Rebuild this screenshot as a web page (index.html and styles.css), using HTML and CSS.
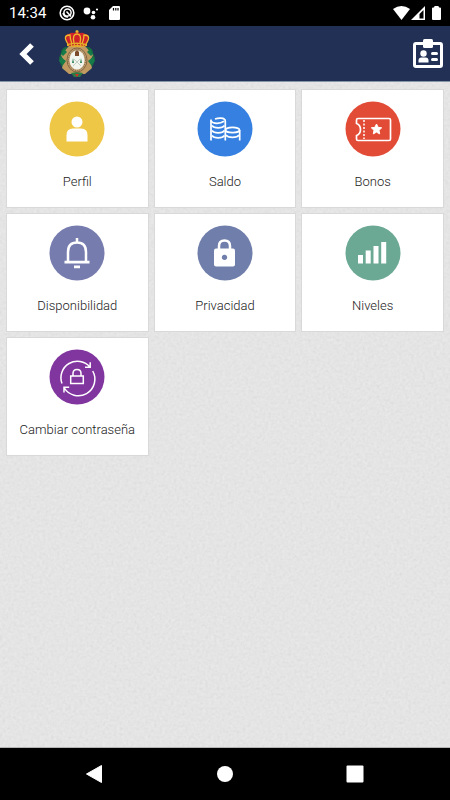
FILE: index.html
```html
<!DOCTYPE html>
<html lang="es">
<head>
<meta charset="utf-8">
<meta name="viewport" content="width=device-width, initial-scale=1">
<title>Mi cuenta</title>
<link rel="stylesheet" href="styles.css">
</head>
<body>
<div class="status">
  <time class="clock">14:34</time>
  <svg class="notices" viewBox="0 0 64 26" aria-hidden="true">
    <circle cx="8" cy="13" r="6.8" fill="none" stroke="#fff" stroke-width="1.6"/>
    <circle cx="8.500" cy="12.500" r="3.600" fill="none" stroke="#fff" stroke-width="1.500"/>
    <path d="M7.500 11.500l4.500 5M4 13q1 4 5 4" fill="none" stroke="#fff" stroke-width="1.500"/>
    <g fill="#fff"><circle cx="28" cy="11" r="3.4"/><circle cx="34.5" cy="12.5" r="1.8"/><circle cx="38" cy="9.5" r="1.1"/><circle cx="34" cy="17.3" r="2.3"/>
    <path d="M54 6h6q1 0 1 1v12q0 1-1 1h-9q-1 0-1-1v-9z"/></g>
    <path d="M54.5 8v2.5M56.8 8v2.5M59 8v2.5" stroke="#000" stroke-width="1.2"/>
  </svg>
  <svg class="signals" viewBox="0 0 50 26" aria-hidden="true">
    <path d="M1 9Q9.500 3 18 9L9.500 20z" fill="#fff"/>
    <path d="M33 6v14H19z" fill="#fff"/>
    <path d="M31.500 10v8.500h-4v-4.500z" fill="#000"/>
    <path d="M43 6h3q1 0 1 1.500h1q1 0 1 1V19q0 1-1 1h-7q-1 0-1-1V8.500q0-1 1-1h1q0-1.500 1-1.500z" fill="#fff"/>
  </svg>
</div>
<header class="bar">
  <button class="back" type="button" aria-label="Volver">
    <svg viewBox="0 0 18 26"><path d="M14 4L5 13l9 9" fill="none" stroke="#fff" stroke-width="5.200"/></svg>
  </button>
  <svg class="crest" viewBox="0 0 38 50" role="img" aria-label="Escudo">
    <path d="M7 18q-4 2-4 6l-2 5 1 5 2 4q1 4 6 4l9 4 9-4q5 0 6-4l2-4 1-5-2-5q0-4-4-6z" fill="#17683f"/>
    <path d="M11 17h16l8 9-3 6 2 7-7 6H11l-7-6 2-7-3-6z" fill="#c19a62"/>
    <path d="M6 20l-3 5 2 2 4-4zM32 20l3 5-2 2-4-4zM3 28l-2 4 4 4 3-4zM35 28l2 4-4 4-3-4z" fill="#157b48"/>
    <path d="M13 44l6-1 6 1-3 4h-6z" fill="#2b7a45"/><path d="M17 45l2 3 2-3z" fill="#d22f27"/>
    <ellipse cx="19" cy="31" rx="10" ry="12" fill="#c7a477" stroke="#83653f"/>
    <ellipse cx="19" cy="31" rx="8.500" ry="10.500" fill="none" stroke="#6d5a40" stroke-width="1" stroke-dasharray="1 1"/>
    <ellipse cx="19" cy="31" rx="7.500" ry="9.500" fill="#f2f5ee"/>
    <path d="M17 27v-4l2-2 2 2v4z" fill="#7b4b2b"/>
    <path d="M14 34l1-5 1 5zM22 34l1-5 1 5z" fill="#2f8259"/>
    <path d="M15 37l7-7M16 30l7 7" fill="none" stroke="#c2cdc4"/>
    <path d="M10 16L7 10q0-5 4-5 2-2 5-1l2-1h2l2 1q3-1 5 1 4 0 4 5l-3 6z" fill="#cf2229"/>
    <path d="M10 15Q4 6 12 6q0 4 2 9M16 14q-2-9 3-9t3 9M28 15Q34 6 26 6q0 4-2 9" fill="none" stroke="#edba2c" stroke-width="1.300"/>
    <path d="M9 15q10-3 20 0v2q-10 2-20 0z" fill="#e6ae27"/>
    <path d="M11 16.500q8-2 16 0" fill="none" stroke="#c7332b" stroke-width="1.200" stroke-dasharray="2 1"/>
    <path d="M19 1v3M17.500 2.500h3" stroke="#edba2c" stroke-width="1.300"/>
  </svg>
  <button class="badge" type="button" aria-label="Carnet">
    <svg viewBox="0 0 34 34">
      <rect x="3.500" y="6.500" width="27" height="23" rx="1.500" fill="none" stroke="#fff" stroke-width="3"/>
      <rect x="12" y="2" width="10" height="9" rx="1.500" fill="#fff"/>
      <circle cx="12.500" cy="16.500" r="3.200" fill="#fff"/>
      <path d="M7.500 25.500v-2q0-3 3-3h4q3 0 3 3v2z" fill="#fff"/>
      <rect x="20" y="15" width="7" height="3" rx="1.500" fill="#fff"/><rect x="20" y="21" width="7" height="3" rx="1.500" fill="#fff"/>
    </svg>
  </button>
</header>
<main class="page">
  <svg class="paper" aria-hidden="true">
    <filter id="grain" x="0" y="0" width="100%" height="100%">
      <feTurbulence type="fractalNoise" baseFrequency="0.35" numOctaves="3" seed="4"/>
      <feColorMatrix values="0.060 0.060 0 0 0.831  0.060 0.060 0 0 0.831  0.060 0.060 0 0 0.831  0 0 0 0 1" color-interpolation-filters="sRGB"/>
    </filter>
    <rect width="100%" height="100%" filter="url(#grain)"/>
  </svg>
  <nav class="grid">
    <a class="card" href="#perfil">
      <svg class="icon" viewBox="0 0 56 56" aria-hidden="true"><circle cx="28" cy="28" r="27.500" fill="#efc747"/>
        <g fill="#fff"><circle cx="28" cy="21" r="5.500"/><path d="M17.500 40.500V34q0-6.500 6.500-6.500h8q6.500 0 6.500 6.500v6.500z"/></g></svg>
      <span>Perfil</span>
    </a>
    <a class="card" href="#saldo">
      <svg class="icon" viewBox="0 0 56 56" aria-hidden="true"><circle cx="28" cy="28" r="27.500" fill="#3580e0"/>
        <g fill="none" stroke="#fff" stroke-width="1.700">
          <path d="M14 18.500V39.500M28.300 20V39.500M42.700 29v10.500"/>
          <path d="M18 18q3-1 6-.8 4.300.3 4.300 3M14 19.500q1 2.800 6 2.800 4 0 7-2"/>
          <path d="M15 24.500q1.500 2.300 6.200 2.300t6.200-2.300M15 29.500q1.500 2.300 6.200 2.300t6.200-2.300M15 34.500q1.500 2.300 6.200 2.300t6.200-2.300"/>
          <ellipse cx="35.500" cy="29" rx="7" ry="2.700"/><path d="M29 34q1.500 2.300 6.500 2.300T42 34"/>
        </g></svg>
      <span>Saldo</span>
    </a>
    <a class="card" href="#bonos">
      <svg class="icon" viewBox="0 0 56 56" aria-hidden="true"><circle cx="28" cy="28" r="27.500" fill="#e24b36"/>
        <path d="M13 17.500h31q1.500 0 1.500 1.500v19q0 1.500-1.500 1.500H13q-1.500 0-1.500-1.500v-3.500q4-1.500 4-6t-4-6V19q0-1.500 1.500-1.500z" fill="none" stroke="#fff" stroke-width="1.700"/>
        <path d="M19 19v19" stroke="#fff" stroke-width="1.500" stroke-dasharray="2 1.500"/>
        <path d="M31.500 23l1.600 3.300 3.600.5-2.700 2.500.7 3.600-3.200-1.800-3.200 1.800.7-3.600-2.700-2.500 3.600-.5z" fill="#fff" stroke="#fff" stroke-linejoin="round"/></svg>
      <span>Bonos</span>
    </a>
    <a class="card" href="#disponibilidad">
      <svg class="icon" viewBox="0 0 56 56" aria-hidden="true"><circle cx="28" cy="28" r="27.500" fill="#767cae"/>
        <path d="M19 37V27q0-9.500 9-9.500t9 9.500v10M28 13v4.500" fill="none" stroke="#fff" stroke-width="2.500"/>
        <path d="M15.500 35.800h25v2.700h-25zM25 40.500h6v2.700h-6z" fill="#fff"/></svg>
      <span>Disponibilidad</span>
    </a>
    <a class="card" href="#privacidad">
      <svg class="icon" viewBox="0 0 56 56" aria-hidden="true"><circle cx="28" cy="28" r="27.500" fill="#6f7eaa"/>
        <rect x="17" y="23.500" width="21" height="18" rx="2" fill="#fff"/>
        <path d="M22 24v-3q0-5.500 5.500-5.500T33 21v3" fill="none" stroke="#fff" stroke-width="2.500"/>
        <circle cx="27.500" cy="32.300" r="2.600" fill="#6f7eaa"/></svg>
      <span>Privacidad</span>
    </a>
    <a class="card" href="#niveles">
      <svg class="icon" viewBox="0 0 56 56" aria-hidden="true"><circle cx="28" cy="28" r="27.500" fill="#6ca995"/>
        <path d="M13 30h5v8.500h-5zM20.700 25.500h5v13h-5zM28.500 21h5v17.500h-5zM36.200 17h5v21.500h-5z" fill="#fff"/></svg>
      <span>Niveles</span>
    </a>
    <a class="card" href="#cambiar">
      <svg class="icon" viewBox="0 0 56 56" aria-hidden="true"><circle cx="28" cy="28" r="27.500" fill="#81359f"/>
        <g fill="none" stroke="#fff" stroke-width="1.500">
          <path d="M13 34.500A16.500 16.500 0 0 1 41 18M36 18.200h5.200v-5M43.700 22A16.500 16.500 0 0 1 15 38.500M20.200 38.200H15V43.500"/>
          <path d="M21.700 27h12.600v7.500H21.700zM24 27v-2.500q0-4 4-4t4 4V27"/>
        </g></svg>
      <span>Cambiar contraseña</span>
    </a>
  </nav>
</main>
<footer class="system">
  <button type="button" aria-label="Atrás"><svg viewBox="0 0 20 20"><path d="M1.500 10L16.500 1.500v17z" fill="#fff" stroke="#fff" stroke-linejoin="round"/></svg></button>
  <button type="button" aria-label="Inicio"><svg viewBox="0 0 20 20"><circle cx="10" cy="10" r="8" fill="#fff"/></svg></button>
  <button type="button" aria-label="Recientes"><svg viewBox="0 0 20 20"><rect x="1.500" y="1.500" width="17" height="17" rx="1" fill="#fff"/></svg></button>
</footer>
</body>
</html>
```
FILE: styles.css
```css
* { box-sizing: border-box; }

body {
  margin: 0;
  min-height: 100vh;
  display: flex;
  flex-direction: column;
  background: #e4e4e4;
  font-family: Roboto, "Liberation Sans", sans-serif;
}

button {
  padding: 0;
  border: 0;
  background: none;
}

svg { display: block; }

.status {
  display: flex;
  align-items: center;
  height: 26px;
  padding: 0 8px 0 9px;
  background: #000;
  color: #fff;
}

.clock {
  font-size: 15px;
  line-height: 28px;
}

.notices {
  width: 64px;
  height: 26px;
  margin-left: 13px;
}

.signals {
  width: 50px;
  height: 26px;
  margin-left: auto;
}

.bar {
  display: flex;
  align-items: center;
  height: 56px;
  padding: 0 5px 0 18px;
  background: #223056;
  border-bottom: 1px solid #8496a8;
}

.back svg {
  width: 18px;
  height: 26px;
}

.crest {
  width: 38px;
  height: 50px;
  margin-left: 22px;
}

.badge { margin-left: auto; }

.badge svg {
  width: 34px;
  height: 34px;
}

.page {
  position: relative;
  flex: 1;
  padding: 7px 6px;
  border-bottom: 1px solid #b4b4b4;
}

.paper {
  position: absolute;
  inset: 0;
  width: 100%;
  height: 100%;
  filter: brightness(0.975);
}

.grid {
  position: relative;
  display: grid;
  grid-template-columns: repeat(3, minmax(0, 1fr));
  gap: 5px;
}

.card {
  display: flex;
  flex-direction: column;
  align-items: center;
  gap: 14px;
  padding: 11px 4px 15px;
  background: #fff;
  border: 1px solid #d9d9d9;
  color: #222;
  font-size: 13px;
  font-weight: 300;
  line-height: 21px;
  text-align: center;
  text-decoration: none;
}

.icon {
  width: 56px;
  height: 56px;
}

.system {
  display: flex;
  justify-content: center;
  align-items: center;
  gap: 110px;
  height: 52px;
  background: #000;
}

.system svg {
  width: 20px;
  height: 20px;
}
```
